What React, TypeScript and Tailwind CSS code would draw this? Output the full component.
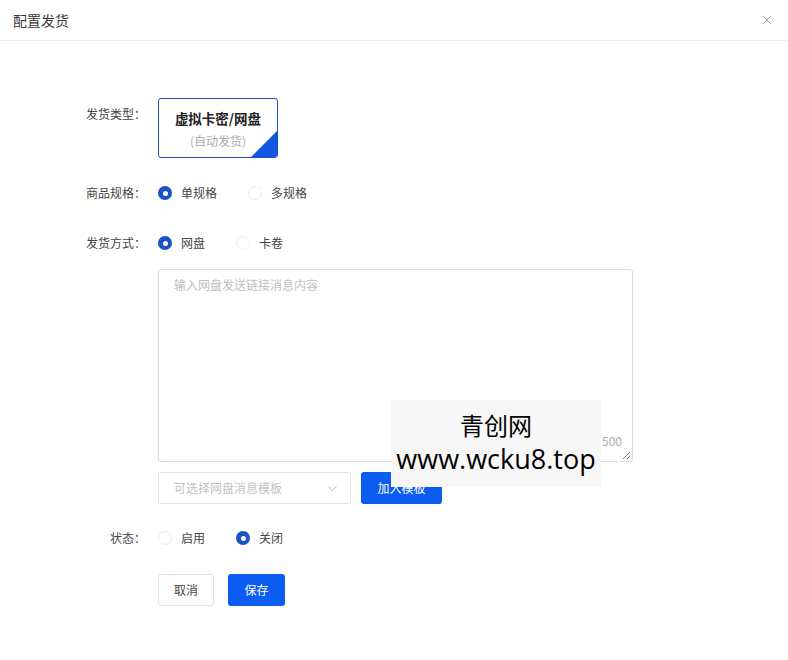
import React from "react";
import { ChevronDown, X } from "lucide-react";

const font = { fontFamily: '"Noto Sans CJK SC", "Noto Sans", sans-serif' };

function Radio({ checked, label }: { checked: boolean; label: string }) {
  return (
    <div className="flex items-center">
      {checked ? (
        <span className="w-[14px] h-[14px] rounded-full bg-[#1a52c9] flex items-center justify-center">
          <span className="w-[5px] h-[5px] rounded-full bg-white" />
        </span>
      ) : (
        <span className="w-[14px] h-[14px] rounded-full border border-[#ececec] bg-white" />
      )}
      <span className="ml-[9px] text-[12px] text-[#444] leading-[20px]">{label}</span>
    </div>
  );
}

function Label({ children }: { children: React.ReactNode }) {
  return (
    <div className="w-[158px] shrink-0 pr-[12px] text-right text-[12px] text-[#444] leading-[20px]">
      {children}
    </div>
  );
}

export default function App() {
  return (
    <div className="w-[788px] h-[660px] bg-white relative overflow-hidden" style={font}>
      <div className="h-[41px] border-b border-[#eeeeee] flex items-center justify-between pl-[13px] pr-[13px]">
        <span className="text-[14px] text-[#3a3a3a]">配置发货</span>
        <X size={16} strokeWidth={1.2} className="text-[#8a8a8a]" />
      </div>

      <div className="flex flex-col">
        <div className="flex mt-[57px]">
          <div className="pt-[6px]">
            <Label>发货类型：</Label>
          </div>
          <div className="relative w-[120px] h-[60px] border border-[#1a52c9] rounded-[3px] overflow-hidden flex flex-col items-center">
            <span className="mt-[9px] text-[13.5px] font-bold text-[#222] leading-[20px]">虚拟卡密/网盘</span>
            <span className="mt-[4px] text-[12px] text-[#aaa] leading-[18px]">(自动发货)</span>
            <svg className="absolute right-0 bottom-0" width="26" height="26" viewBox="0 0 26 26">
              <polygon points="26,0 26,26 0,26" fill="#1356e0" />
            </svg>
          </div>
        </div>

        <div className="flex items-center mt-[25px] h-[20px]">
          <Label>商品规格：</Label>
          <Radio checked label="单规格" />
          <div className="ml-[31px]">
            <Radio checked={false} label="多规格" />
          </div>
        </div>

        <div className="flex items-center mt-[30px] h-[20px]">
          <Label>发货方式：</Label>
          <Radio checked label="网盘" />
          <div className="ml-[31px]">
            <Radio checked={false} label="卡卷" />
          </div>
        </div>

        <div className="ml-[158px] mt-[16px] relative w-[475px] h-[193px] border border-[#dcdcdc] rounded-[3px]">
          <div className="pl-[15px] pt-[6px] text-[12px] text-[#c0c0c0] leading-[18px]">输入网盘发送链接消息内容</div>
          <span className="absolute right-[10px] bottom-[12px] text-[12px] text-[#aaa] leading-[16px]">500</span>
          <svg className="absolute right-[1px] bottom-[1px]" width="9" height="9" viewBox="0 0 9 9">
            <line x1="8" y1="1" x2="1" y2="8" stroke="#777" strokeWidth="1" />
            <line x1="8" y1="5" x2="5" y2="8" stroke="#777" strokeWidth="1" />
          </svg>
        </div>

        <div className="ml-[158px] mt-[10px] flex items-center">
          <div className="w-[193px] h-[32px] border border-[#e3e3e3] rounded-[3px] flex items-center justify-between pl-[15px] pr-[10px]">
            <span className="text-[12px] text-[#c3c3c3]">可选择网盘消息模板</span>
            <ChevronDown size={15} strokeWidth={1.3} className="text-[#aaa]" />
          </div>
          <div className="ml-[10px] w-[81px] h-[32px] rounded-[3px] bg-[#0b5cf0] text-white text-[12px] flex items-center justify-center">
            加入模板
          </div>
        </div>

        <div className="flex items-center mt-[24px] h-[20px]">
          <Label>状态：</Label>
          <Radio checked={false} label="启用" />
          <div className="ml-[31px]">
            <Radio checked label="关闭" />
          </div>
        </div>

        <div className="ml-[158px] mt-[26px] flex items-center">
          <div className="w-[56px] h-[32px] border border-[#e3e3e3] rounded-[3px] text-[12px] text-[#444] flex items-center justify-center">
            取消
          </div>
          <div className="ml-[14px] w-[57px] h-[32px] rounded-[3px] bg-[#0b5cf0] text-white text-[12px] flex items-center justify-center">
            保存
          </div>
        </div>
      </div>

      <div className="absolute left-[391px] top-[400px] w-[210px] h-[87px] bg-[#f7f7f7] flex flex-col items-center text-black">
        <span className="mt-[8px] text-[24px] leading-[34px]" style={{ fontFamily: '"Noto Sans CJK SC", sans-serif' }}>青创网</span>
        <span className="mt-[-2px] text-[27px] leading-[38px]" style={{ fontFamily: '"Open Sans", "Noto Sans", sans-serif' }}>www.wcku8.top</span>
      </div>
    </div>
  );
}
